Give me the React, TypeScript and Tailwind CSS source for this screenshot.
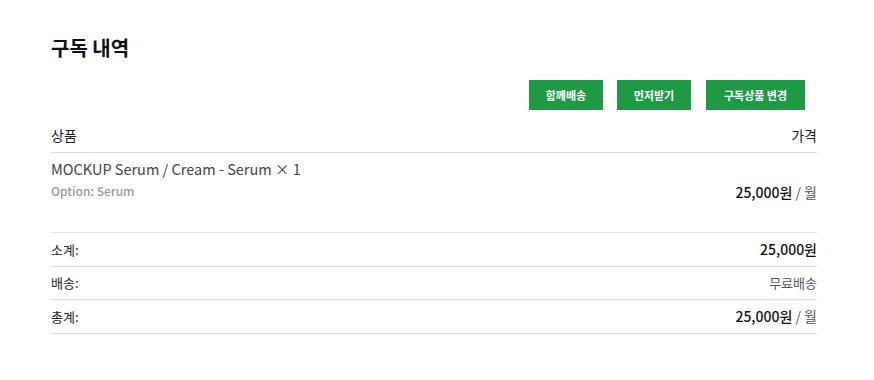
import React from "react";

const font = { fontFamily: '"Noto Sans CJK KR", "Noto Sans", sans-serif' };

export default function App() {
  return (
    <div className="w-[874px] h-[380px] bg-white" style={font}>
      <div className="ml-[51px] w-[766px] pt-[33px]">
        <h2 className="text-[20px] leading-[30px] font-bold text-[#111]">구독 내역</h2>
        <div className="mt-[17px] flex justify-end pr-[12px]">
          <button className="w-[74px] h-[30px] bg-[#1e9a45] text-white text-[11px] font-bold">함께배송</button>
          <button className="ml-[14px] w-[74px] h-[30px] bg-[#1e9a45] text-white text-[11px] font-bold">먼저받기</button>
          <button className="ml-[15px] w-[99px] h-[30px] bg-[#1e9a45] text-white text-[11px] font-bold">구독상품 변경</button>
        </div>
        <div className="h-[43px] flex items-end justify-between pb-[6px] border-b border-[#ddd] text-[14px] text-[#222]">
          <span>상품</span>
          <span>가격</span>
        </div>
        <div className="h-[80px] flex justify-between border-b border-[#e6e6e6]">
          <div className="pt-[6px]">
            <div className="text-[14.5px] leading-[20px] text-[#444]">MOCKUP Serum / Cream - Serum × 1</div>
            <div className="text-[12px] leading-[24px] font-medium text-[#999]">Option: Serum</div>
          </div>
          <div className="pt-[29px] text-[14px] leading-[20px]">
            <span className="font-medium text-[#111]">25,000원</span>
            <span className="text-[#555]"> / 월</span>
          </div>
        </div>
        <div className="h-[34px] flex items-center justify-between border-b border-[#ddd] text-[13px]">
          <span className="text-[#222]">소계:</span>
          <span className="text-[14px] font-medium text-[#111]">25,000원</span>
        </div>
        <div className="h-[33px] flex items-center justify-between border-b border-[#ddd] text-[13px]">
          <span className="text-[#222]">배송:</span>
          <span className="text-[#555]">무료배송</span>
        </div>
        <div className="h-[34px] flex items-center justify-between border-b border-[#ddd] text-[13px]">
          <span className="text-[#222]">총계:</span>
          <span className="text-[14px]">
            <span className="font-medium text-[#111]">25,000원</span>
            <span className="text-[#555]"> / 월</span>
          </span>
        </div>
      </div>
    </div>
  );
}
